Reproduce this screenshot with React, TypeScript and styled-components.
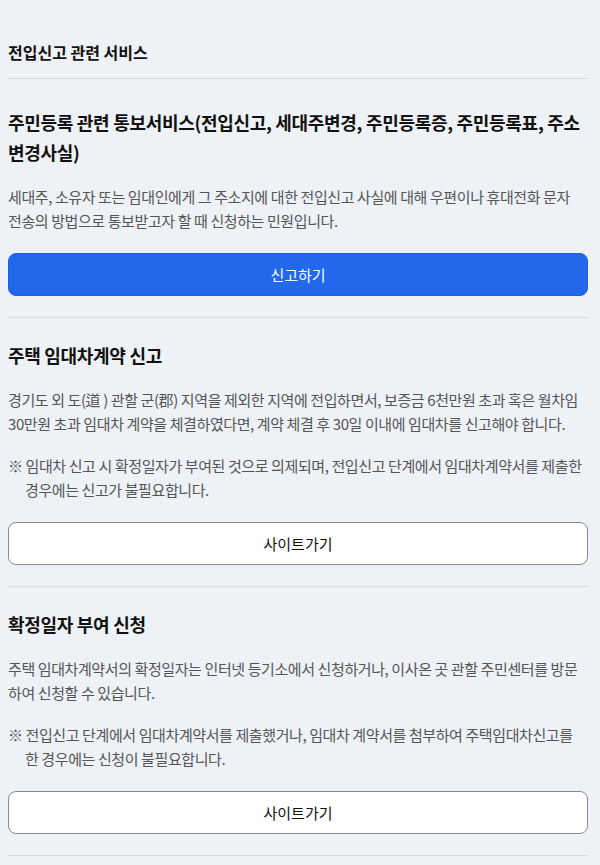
import React from "react";
import styled, { createGlobalStyle } from "styled-components";

const Global = createGlobalStyle`
  html, body { margin: 0; padding: 0; background: #eef1f6; }
  body {
    font-family: "Noto Sans CJK KR", "Noto Sans", sans-serif;
    color: #111;
  }
`;

const Page = styled.div`
  padding: 40px 12px 0 8px;
  display: flex;
  flex-direction: column;
`;

const Heading = styled.h2`
  margin: 0;
  font-size: 16px;
  line-height: 24px;
  font-weight: 700;
  color: #111;
  padding-bottom: 14px;
  border-bottom: 1px solid #d3d6da;
`;

const Section = styled.section`
  display: flex;
  flex-direction: column;
  padding: 22px 0 21px;
  border-bottom: 1px solid #d9dce0;
`;

const Title = styled.h3<{ $first?: boolean }>`
  margin: ${(p) => (p.$first ? "6px" : "0")} 0 0;
  font-size: 18px;
  line-height: 30px;
  font-weight: 700;
  color: #111;
  letter-spacing: -0.3px;
`;

const Para = styled.p`
  margin: 18px 0 0;
  font-size: 15px;
  line-height: 24px;
  color: #555;
  letter-spacing: -0.4px;
  word-break: keep-all;
`;

const Note = styled.p`
  margin: 18px 0 0;
  font-size: 15px;
  line-height: 24px;
  color: #555;
  letter-spacing: -0.4px;
  word-break: keep-all;
  padding-left: 17px;
  text-indent: -17px;
`;

const Button = styled.button<{ $primary?: boolean }>`
  margin-top: 20px;
  height: 43px;
  width: 100%;
  border-radius: 8px;
  font-family: inherit;
  font-size: 15px;
  cursor: pointer;
  background: ${(p) => (p.$primary ? "#2168ea" : "#fff")};
  color: ${(p) => (p.$primary ? "#fff" : "#111")};
  border: 1px solid ${(p) => (p.$primary ? "#1e62e0" : "#8a8a8a")};
`;

export default function App() {
  return (
    <>
      <Global />
      <Page>
        <Heading>전입신고 관련 서비스</Heading>
        <Section>
          <Title $first>
            주민등록 관련 통보서비스(전입신고, 세대주변경, 주민등록증, 주민등록표, 주소변경사실)
          </Title>
          <Para>
            세대주, 소유자 또는 임대인에게 그 주소지에 대한 전입신고 사실에 대해 우편이나 휴대전화 문자
            전송의 방법으로 통보받고자 할 때 신청하는 민원입니다.
          </Para>
          <Button $primary>신고하기</Button>
        </Section>
        <Section>
          <Title>주택 임대차계약 신고</Title>
          <Para>
            경기도 외 도(道 ) 관할 군(郡) 지역을 제외한 지역에 전입하면서, 보증금 6천만원 초과 혹은 월차임
            30만원 초과 임대차 계약을 체결하였다면, 계약 체결 후 30일 이내에 임대차를 신고해야 합니다.
          </Para>
          <Note>
            ※ 임대차 신고 시 확정일자가 부여된 것으로 의제되며, 전입신고 단계에서 임대차계약서를 제출한
            경우에는 신고가 불필요합니다.
          </Note>
          <Button>사이트가기</Button>
        </Section>
        <Section>
          <Title>확정일자 부여 신청</Title>
          <Para>
            주택 임대차계약서의 확정일자는 인터넷 등기소에서 신청하거나, 이사온 곳 관할 주민센터를 방문
            하여 신청할 수 있습니다.
          </Para>
          <Note>
            ※ 전입신고 단계에서 임대차계약서를 제출했거나, 임대차 계약서를 첨부하여 주택임대차신고를
            한 경우에는 신청이 불필요합니다.
          </Note>
          <Button>사이트가기</Button>
        </Section>
      </Page>
    </>
  );
}
